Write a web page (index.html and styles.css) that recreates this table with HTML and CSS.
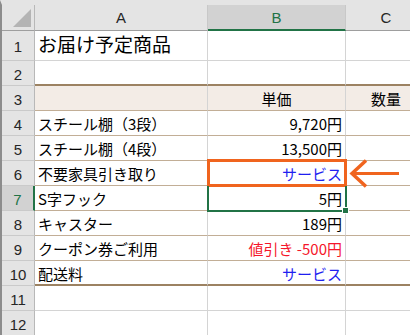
FILE: index.html
```
<!DOCTYPE html>
<html>
<head>
  <meta charset="UTF-8">
  <link rel="stylesheet" href="styles.css">
</head>
<body>
  <div class="sheet">
    <div class="row head">
      <div class="rh corner">
        <svg width="18" height="18" viewBox="0 0 18 18"><polygon points="18,0 18,18 0,18" fill="#b4b4b4"/></svg>
      </div>
      <div class="ch">A</div>
      <div class="ch sel">B</div>
      <div class="ch cut">C</div>
    </div>

    <div class="row r1">
      <div class="rh">1</div>
      <div class="c title">お届け予定商品</div>
      <div class="c"></div>
      <div class="c"></div>
    </div>
    <div class="row top-rule">
      <div class="rh">2</div>
      <div class="c"></div>
      <div class="c"></div>
      <div class="c"></div>
    </div>
    <div class="row t caption">
      <div class="rh">3</div>
      <div class="c"></div>
      <div class="c mid">単価</div>
      <div class="c mid cut">数量</div>
    </div>
    <div class="row t">
      <div class="rh">4</div>
      <div class="c">スチール棚（3段）</div>
      <div class="c num">9,720円</div>
      <div class="c"></div>
    </div>
    <div class="row t">
      <div class="rh">5</div>
      <div class="c">スチール棚（4段）</div>
      <div class="c num">13,500円</div>
      <div class="c"></div>
    </div>
    <div class="row t">
      <div class="rh">6</div>
      <div class="c">不要家具引き取り</div>
      <div class="c num free">サービス</div>
      <div class="c"></div>
    </div>
    <div class="row t">
      <div class="rh active">7</div>
      <div class="c">S字フック</div>
      <div class="c num">5円</div>
      <div class="c"></div>
    </div>
    <div class="row t">
      <div class="rh">8</div>
      <div class="c">キャスター</div>
      <div class="c num">189円</div>
      <div class="c"></div>
    </div>
    <div class="row t">
      <div class="rh">9</div>
      <div class="c">クーポン券ご利用</div>
      <div class="c num minus">値引き -500円</div>
      <div class="c"></div>
    </div>
    <div class="row t last">
      <div class="rh">10</div>
      <div class="c">配送料</div>
      <div class="c num free">サービス</div>
      <div class="c"></div>
    </div>
    <div class="row">
      <div class="rh">11</div>
      <div class="c"></div>
      <div class="c"></div>
      <div class="c"></div>
    </div>
    <div class="row">
      <div class="rh">12</div>
      <div class="c"></div>
      <div class="c"></div>
      <div class="c"></div>
    </div>

    <!-- highlight on B6, active cell B7, pointer arrow -->
    <div class="mark"></div>
    <div class="cursor"></div>
    <div class="handle"></div>
    <svg class="arrow" width="56" height="32" viewBox="0 0 56 32">
      <path d="M18 2.5 L4 15.5 L18 28.5" fill="none" stroke="#f0641e" stroke-width="3.5"/>
      <path d="M5 15.5 H51" fill="none" stroke="#f0641e" stroke-width="3.2"/>
    </svg>
  </div>
</body>
</html>
```

FILE: styles.css
```
html, body { margin: 0; padding: 0; }
body {
  width: 410px;
  height: 335px;
  overflow: hidden;
  background: #fff;
  font-family: "Noto Sans CJK JP", "Liberation Sans", sans-serif;
  color: #000;
}

.sheet {
  position: relative;
  border-left: 2px solid #8c8c8c;
  border-top: 5px solid #e4e4e4;
  width: 408px;
}

/* column C is cut by the window edge, so its content sits right of centre */
.row {
  display: grid;
  grid-template-columns: 33px 173px 138px 64px;
  height: 25px;
}
.row > div { box-sizing: border-box; }

/* column letters */
.row.head { height: 26px; }
.ch {
  background: #e4e4e4;
  border-right: 1px solid #c8c8c8;
  border-bottom: 1px solid #9e9e9e;
  font-family: "Liberation Sans", sans-serif;
  font-size: 15px;
  display: flex;
  align-items: center;
  justify-content: center;
  padding-bottom: 1px;
  color: #262626;
}
.ch.sel {
  background: #d2d2d2;
  color: #217346;
  border-bottom: 2px solid #217346;
  padding-bottom: 0;
}
.ch.cut { border-right: none; padding-left: 16px; }

/* row numbers */
.rh {
  background: #e4e4e4;
  border-right: 1px solid #b8b8b8;
  border-bottom: 1px solid #cacaca;
  font-family: "Liberation Sans", sans-serif;
  font-size: 15px;
  color: #262626;
  display: flex;
  align-items: center;
  justify-content: center;
  padding-top: 2px;
}
.rh.corner {
  border-bottom: 1px solid #9e9e9e;
  align-items: flex-end;
  justify-content: flex-end;
  padding: 0 3px 3px 0;
}
.rh.corner svg { display: block; }
.rh.active {
  background: #d2d2d2;
  color: #217346;
  border-right: 2px solid #217346;
}

/* cells */
.c {
  border-right: 1px solid #d4d4d4;
  border-bottom: 1px solid #d4d4d4;
  font-size: 15px;
  line-height: 20px;
  white-space: nowrap;
  display: flex;
  align-items: center;
  padding: 2px 3px 0 3px;
}
.row > .c:last-child { border-right: none; }
.c.num { justify-content: flex-end; }
.c.mid { justify-content: center; }
.c.mid.cut { padding-left: 16px; padding-right: 0; }
.c.free { color: #1f1ff0; }
.c.minus { color: #f5162b; }

.row.r1 { height: 30px; }
.c.title { font-size: 19px; padding-top: 0; padding-bottom: 3px; }

.row.top-rule .c { border-bottom: 2px solid #9c8262; }
.row.t .c { border-bottom-color: #c2ae96; }
.row.caption .c { background: #f3ece6; }
.row.t.last .c { border-bottom: 2px solid #9c8262; }

/* overlays */
.mark {
  position: absolute;
  left: 205px;
  top: 154px;
  width: 140px;
  height: 28px;
  border: 3px solid #f0641e;
  box-sizing: border-box;
}
.cursor {
  position: absolute;
  left: 205px;
  top: 181px;
  width: 140px;
  height: 26px;
  border: 2px solid #217346;
  border-top: none;
  box-sizing: border-box;
}
.handle {
  position: absolute;
  left: 340px;
  top: 202px;
  width: 5px;
  height: 5px;
  background: #217346;
  border: 1px solid #fff;
}
.arrow {
  position: absolute;
  left: 346px;
  top: 153px;
}
```
